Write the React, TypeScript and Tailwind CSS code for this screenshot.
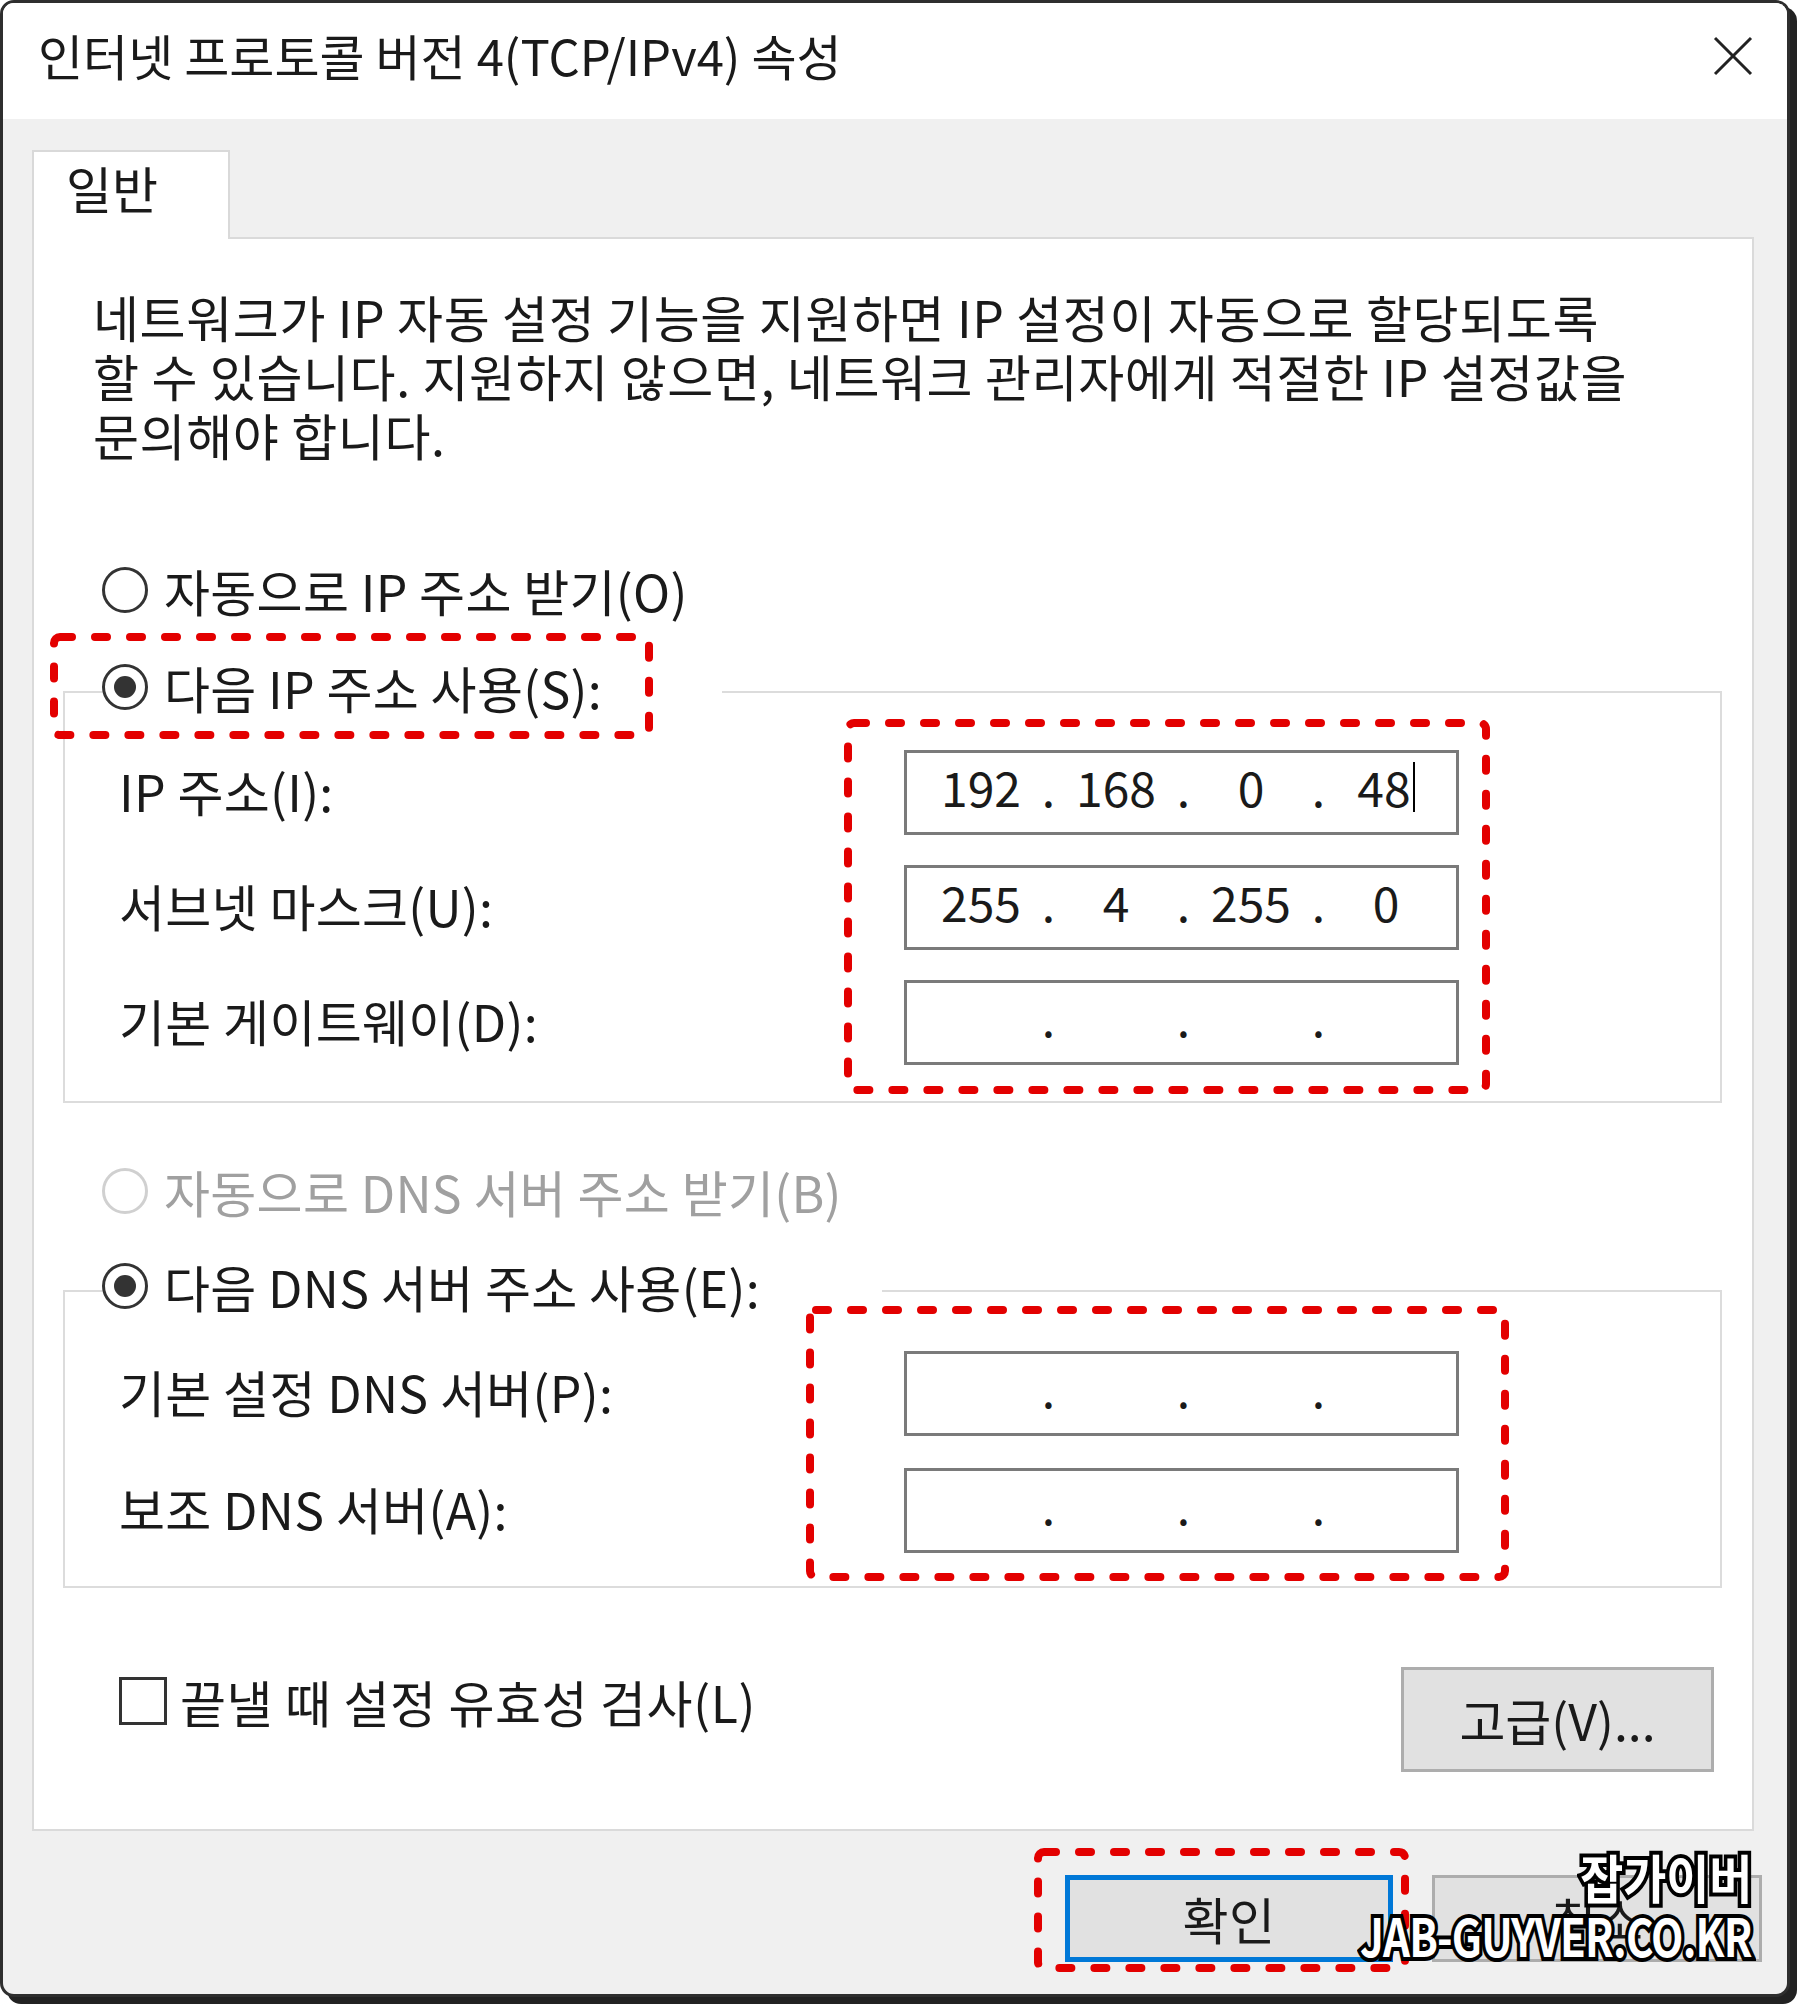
import React from "react";

function Radio({ checked, disabled }: { checked?: boolean; disabled?: boolean }) {
  return (
    <span
      className={`w-[46px] h-[46px] rounded-full border-[3px] ${
        disabled ? "border-[#d0d0d0]" : "border-[#333333]"
      } bg-white flex items-center justify-center shrink-0`}
    >
      {checked && <span className="w-[22px] h-[22px] rounded-full bg-[#333333]" />}
    </span>
  );
}

function IpBox({ values, cursor }: { values: string[]; cursor?: boolean }) {
  return (
    <div className="w-[555px] h-[85px] border-[3px] border-[#7a7a7a] bg-white flex items-center pl-[15px] pb-[12px] text-[48px] leading-[59px] tracking-normal text-[#1a1a1a] shrink-0">
      {values.map((v, i) => (
        <React.Fragment key={i}>
          <span className="w-[118px] h-[59px] flex justify-center items-center">
            {v}
            {cursor && i === 3 && <span className="w-[2px] h-[50px] bg-black ml-[2px]" />}
          </span>
          {i < 3 && <span className="w-[17px] text-center">.</span>}
        </React.Fragment>
      ))}
    </div>
  );
}

function Row({ label, values, cursor }: { label: string; values: string[]; cursor?: boolean }) {
  return (
    <div className="flex items-center justify-between">
      <span className="text-[50px] leading-[59px] tracking-[0.3px] mb-[4px]">{label}</span>
      <IpBox values={values} cursor={cursor} />
    </div>
  );
}

export default function App() {
  const empty = ["", "", "", ""];
  const T = "text-[50px] leading-[59px] tracking-[0.6px]";
  return (
    <div className="relative w-[1800px] h-[2004px] bg-white font-['Noto_Sans_CJK_KR','Noto_Sans',sans-serif] text-[#1a1a1a]">
      <div className="w-[1790px] h-[1997px] rounded-[14px] border-[3px] border-[#2e2e2e] bg-[#f0f0f0] overflow-hidden shadow-[7px_7px_0_#222222] flex flex-col">
        {/* title bar */}
        <div className="h-[116px] bg-white flex items-start justify-between pl-[35px] pr-[33px] pt-[22px] shrink-0">
          <span className="text-[49px] leading-[59px]">인터넷 프로토콜 버전 4(TCP/IPv4) 속성</span>
          <svg width="42" height="42" viewBox="0 0 42 42" className="mt-[10px]">
            <line x1="3" y1="3" x2="39" y2="39" stroke="#222" strokeWidth="3" />
            <line x1="39" y1="3" x2="3" y2="39" stroke="#222" strokeWidth="3" />
          </svg>
        </div>

        {/* body */}
        <div className="pl-[29px] pt-[31px] flex flex-col">
          <div className="w-[198px] h-[89px] bg-white border-2 border-b-0 border-[#d9d9d9] pl-[32px] pt-[6px] text-[50px] leading-[59px] relative z-10 mb-[-2px]">
            일반
          </div>
          <div className="w-[1722px] h-[1594px] bg-white border-2 border-[#dadada] flex flex-col">
            <div className={`pl-[59px] pt-[48px] ${T}`}>
              <div>네트워크가 IP 자동 설정 기능을 지원하면 IP 설정이 자동으로 할당되도록</div>
              <div>할 수 있습니다. 지원하지 않으면, 네트워크 관리자에게 적절한 IP 설정값을</div>
              <div>문의해야 합니다.</div>
            </div>

            <div className="mt-[96px] ml-[68px] h-[60px] flex items-center gap-[16px]">
              <Radio />
              <span className="text-[50px] leading-[59px] tracking-[0.3px]">자동으로 IP 주소 받기(O)</span>
            </div>

            <fieldset className="mt-[37px] ml-[29px] w-[1659px] border-2 border-[#dcdcdc] pl-[54px] pr-[261px] pb-[36px]">
              <legend className="ml-[-17px] w-[620px] h-[70px] bg-white">
                <div className="h-[60px] flex items-center gap-[16px]">
                  <Radio checked />
                  <span className="text-[50px] leading-[59px] tracking-[0.3px]">다음 IP 주소 사용(S):</span>
                </div>
              </legend>
              <div className="pt-[23px] flex flex-col gap-[30px]">
                <Row label="IP 주소(I):" values={["192", "168", "0", "48"]} cursor />
                <Row label="서브넷 마스크(U):" values={["255", "4", "255", "0"]} />
                <Row label="기본 게이트웨이(D):" values={empty} />
              </div>
            </fieldset>

            <div className="mt-[58px] ml-[68px] h-[60px] flex items-center gap-[16px]">
              <Radio disabled />
              <span className="text-[50px] leading-[59px] tracking-[0.3px] text-[#a0a0a0]">자동으로 DNS 서버 주소 받기(B)</span>
            </div>

            <fieldset className="mt-[35px] ml-[29px] w-[1659px] border-2 border-[#dcdcdc] pl-[54px] pr-[261px] pb-[33px]">
              <legend className="ml-[-17px] w-[780px] h-[70px] bg-white">
                <div className="h-[60px] flex items-center gap-[16px]">
                  <Radio checked />
                  <span className="text-[50px] leading-[59px] tracking-[0.3px]">다음 DNS 서버 주소 사용(E):</span>
                </div>
              </legend>
              <div className="pt-[25px] flex flex-col gap-[32px]">
                <Row label="기본 설정 DNS 서버(P):" values={empty} />
                <Row label="보조 DNS 서버(A):" values={empty} />
              </div>
            </fieldset>

            <div className="mt-[79px] ml-[85px] mr-[38px] flex items-start justify-between">
              <div className="mt-[4px] h-[60px] flex items-center gap-[13px]">
                <span className="w-[48px] h-[48px] border-[3px] border-[#333333] bg-white" />
                <span className={T}>끝낼 때 설정 유효성 검사(L)</span>
              </div>
              <div className="w-[313px] h-[105px] bg-[#e1e1e1] border-[3px] border-[#adadad] flex items-center justify-center text-[50px] leading-[59px]">
                고급(V)...
              </div>
            </div>
          </div>
        </div>

        {/* buttons */}
        <div className="mt-[44px] pr-[25px] flex justify-end gap-[39px]">
          <div className={`w-[328px] h-[87px] bg-[#e1e1e1] border-[5px] border-[#0078d7] flex items-center justify-center ${T}`}>
            확인
          </div>
          <div className={`w-[330px] h-[87px] bg-[#e1e1e1] border-[3px] border-[#adadad] flex items-center justify-center ${T}`}>
            취소
          </div>
        </div>
      </div>

      {/* red annotation marks */}
      <svg className="absolute left-0 top-0 pointer-events-none" width="1800" height="2004" viewBox="0 0 1800 2004">
        <g fill="none" stroke="#e30000" strokeWidth="8" strokeDasharray="12 23" strokeLinecap="round">
          <rect x="54" y="637" width="595" height="98" rx="6" />
          <rect x="848" y="723" width="638" height="367" rx="6" />
          <rect x="810" y="1310" width="695" height="267" rx="6" />
          <rect x="1038" y="1852" width="367" height="116" rx="6" />
        </g>
      </svg>

      {/* watermark */}
      <div className="absolute right-[48px] top-[1848px] flex flex-col items-end font-bold text-white text-[52px] leading-[58px] [-webkit-text-stroke:8px_#000] [paint-order:stroke_fill]">
        <span className="inline-block origin-right scale-x-[0.9]">잡가이버</span>
        <span className="inline-block origin-right scale-x-[0.81] tracking-[-1px]">JAB-GUYVER.CO.KR</span>
      </div>
    </div>
  );
}
